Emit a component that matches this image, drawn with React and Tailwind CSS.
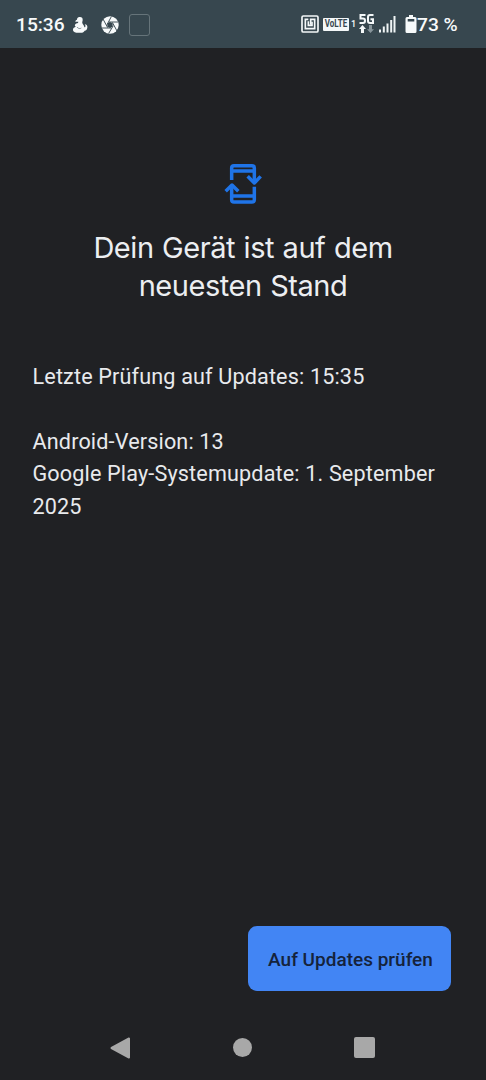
const DuckIcon = () => (
  <svg className="ml-[8px] h-[18px] w-[16px] shrink-0" viewBox="0 0 48 54" fill="#f7fafb">
    <path d="M15 11c0-6 4-9 9-8 5 0 9 4 8 9 0 4-2 6-1 9 1 4 5 6 6 12 1 2 2 1 3-1 1-3 0-5-2-7 6 0 9 5 8 10-1 6-4 8-8 9-3 5-7 6-12 6H13C6 50 2 45 3 40c0-4 4-6 9-8-3-1-4-3-3-6 2-3 5-4 9-5l1-4-9 0c0-3 2-5 5-6z" />
    <path d="M15 33c3 5 9 6 13 3" fill="none" stroke="#37474f" strokeWidth="1.600" />
  </svg>
);

const ApertureIcon = () => (
  <svg className="ml-[13px] h-[18px] w-[18px] shrink-0" viewBox="0 0 54 54">
    <circle cx="27" cy="27" r="26" fill="#f7fafb" />
    <path d="M27 18l8 4v10l-8 4-8-4V22z" fill="#37474f" />
    <path
      d="M24 18h28M34 19l14 26M37 29L23 52M30 36H2M20 35L6 9M18 26L31 2"
      stroke="#37474f"
      strokeWidth="2.800"
      fill="none"
    />
  </svg>
);

const NfcIcon = () => (
  <svg className="h-[18px] w-[18px] shrink-0" viewBox="0 0 54 54" fill="none" stroke="#f4f8f9" strokeWidth="5">
    <rect x="3" y="3" width="48" height="48" rx="4" />
    <path d="M22 13H13v28h28V13H29v16" />
    <path d="M22 19v12h11V20" />
  </svg>
);

const MobileData = () => (
  <div className="ml-[2px] flex h-[20px] w-[16px] shrink-0 flex-col items-center">
    <svg className="h-[10px] w-[15px]" viewBox="0 0 15 10" fill="none" stroke="#f4f8f9" strokeWidth="2">
      <path d="M6.500 1H1.500v3.500h2.500q2 0 2 2.200T4 9H.5" />
      <path d="M14.500 1H11Q9 1 9 3v4q0 2 2 2h3V5.200h-2.500" />
    </svg>
    <svg className="mt-[1px] h-[8px] w-[15px]" viewBox="0 0 15 8">
      <path d="M3.500 0L7 4H5v4H2V4H0z" fill="#f4f8f9" />
      <path d="M11.500 8L15 4.300h-2V0h-3v4.300H8z" fill="#87949a" />
    </svg>
  </div>
);

const SignalIcon = () => (
  <svg className="ml-[5px] h-[18px] w-[18px] shrink-0" viewBox="0 0 18 18" fill="#f0f5f6">
    <rect x="0" y="14.500" width="2" height="3" />
    <rect x="3.800" y="11.500" width="2" height="6" />
    <rect x="7.500" y="8.500" width="2" height="9" />
    <rect x="11.200" y="5" width="2" height="12.500" />
    <rect x="14.500" y="1" width="2" height="16.500" />
  </svg>
);

const BatteryIcon = () => (
  <svg className="ml-[8px] h-[18px] w-[12px] shrink-0" viewBox="0 0 12 18">
    <path d="M4 0h4v2h2q1.500 0 1.500 1.500v13Q11.500 18 10 18H2Q.5 18 .5 16.500v-13Q.5 2 2 2h2z" fill="#f7fafb" />
    <path d="M2.700 4h6.600v2.500H2.700z" fill="#37474f" />
  </svg>
);

const StatusBar = () => (
  <header className="flex h-12 shrink-0 items-center bg-[#37474f] pl-4 pt-px text-[#f7fafb]">
    <span className="w-[48px] whitespace-nowrap pt-px text-[19.2px] font-medium leading-none">15:36</span>
    <DuckIcon />
    <ApertureIcon />
    <span className="ml-[10px] h-[22px] w-[21px] rounded-[3px] border border-[#66747a]" />
    <div className="ml-auto flex items-center pr-[29px]">
      <NfcIcon />
      <span className="ml-[4px] flex h-[13px] w-[26px] shrink-0 items-center justify-center rounded-[1px] bg-[#f4f8f9] text-[#37474f]">
        <span className="scale-x-80 text-[10px] font-bold leading-none">VoLTE</span>
      </span>
      <span className="ml-[2px] text-[9px] font-medium leading-none">1</span>
      <MobileData />
      <SignalIcon />
      <BatteryIcon />
      <span className="w-[40px] whitespace-nowrap pt-px text-[19.2px] font-medium leading-none">73 %</span>
    </div>
  </header>
);

const UpdateIcon = () => (
  <svg
    className="mx-auto h-[60px] w-[60px]"
    viewBox="0 0 180 180"
    fill="none"
    stroke="#1f74e8"
    strokeWidth="10.500"
    strokeLinejoin="round"
  >
    <path d="M56 78V42q0-7 7-7h54q7 0 7 7v45" />
    <path d="M56 51h68M56 126h68" />
    <path d="M124 98v39q0 7-7 7H63q-7 0-7-7V94" />
    <path d="M104 67l20 20 19-20M38 112l19-19 19 19" />
  </svg>
);

const NavigationBar = () => (
  <nav className="flex h-[65px] shrink-0 items-center justify-between pl-[110px] pr-[111px]">
    <svg className="h-[22px] w-[20px]" viewBox="0 0 20 22">
      <path
        d="M19 1.500v19L1.500 11z"
        fill="#a8a8a8"
        stroke="#a8a8a8"
        strokeWidth="2"
        strokeLinejoin="round"
      />
    </svg>
    <span className="ml-px h-[19px] w-[19px] rounded-full bg-[#a8a8a8]" />
    <span className="h-[21px] w-[21px] rounded-[2px] bg-[#a8a8a8]" />
  </nav>
);

const App = () => {
  return (
    <div className="flex h-screen w-full flex-col overflow-hidden bg-[#202124] font-['Roboto',sans-serif]">
      <StatusBar />
      <main className="flex flex-1 flex-col px-8 pt-[106px]">
        <UpdateIcon />
        <h1 className="mt-[15px] text-center font-['Inter',sans-serif] text-[29px] font-normal leading-[38px] tracking-[-0.45px] text-[#eceef1] [word-spacing:0.8px]">
          Dein Gerät ist auf dem
          <br />
          neuesten Stand
        </h1>
        <div className="mt-[56px] whitespace-nowrap pl-[0.5px] text-[21.6px] leading-[32.4px] tracking-[0.15px] text-[#e8eaed]">
          <p>Letzte Prüfung auf Updates: 15:35</p>
          <p className="mt-[32.4px]">Android-Version: 13</p>
          <p>
            Google Play-Systemupdate: 1. September
            <br />
            2025
          </p>
        </div>
        <button
          type="button"
          className="mb-[24px] ml-auto mr-[3px] mt-auto h-[65px] w-[203px] whitespace-nowrap rounded-[9px] bg-[#4285f4] pl-[2px] pt-[3px] text-[19px] font-medium text-[#15233b]"
        >
          Auf Updates prüfen
        </button>
      </main>
      <NavigationBar />
    </div>
  );
};

export default App;
